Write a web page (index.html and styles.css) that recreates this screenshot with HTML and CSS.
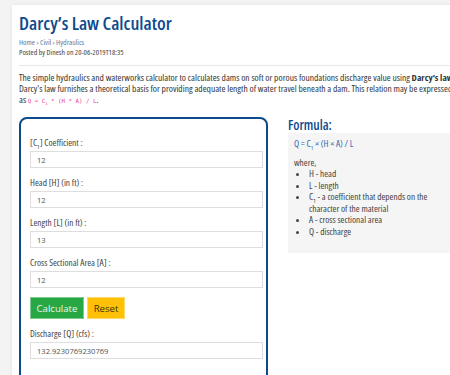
FILE: index.html
```html
<!DOCTYPE html>
<html lang="en">
<head>
  <meta charset="UTF-8">
  <meta name="viewport" content="width=device-width, initial-scale=1.0">
  <title>Darcy's Law Calculator</title>
  <link rel="stylesheet" href="styles.css">
</head>
<body>
  <div class="page">
    <div class="article">
      <h1 class="title">Darcy’s Law Calculator</h1>
      <div class="crumbs">
        <a href="javascript:void(0);">Home</a> › <a href="javascript:void(0);">Civil</a> › <a href="javascript:void(0);">Hydraulics</a>
      </div>
      <div class="posted">Posted by Dinesh on 20-06-2019T18:35</div>
      <hr>
      <p class="intro">
        The simple hydraulics and waterworks calculator to calculates dams on soft or porous foundations discharge value using <b>Darcy's law</b>.<br>
        Darcy's law furnishes a theoretical basis for providing adequate length of water travel beneath a dam. This relation may be expressed<br>
        as <code>Q = C<sub>1</sub> * (H * A) / L</code>.
      </p>
      <div class="main">
        <form class="calc" onsubmit="return false;">
          <label>[C<sub>1</sub>] Coefficient :</label>
          <input type="text" id="c1" value="12">
          <label>Head [H] (in ft) :</label>
          <input type="text" id="h" value="12">
          <label>Length [L] (in ft) :</label>
          <input type="text" id="l" value="13">
          <label>Cross Sectional Area [A] :</label>
          <input type="text" id="a" value="12">
          <div class="buttons">
            <button class="btn btn-calc" id="btn-calc">Calculate</button>
            <button class="btn btn-reset" id="btn-reset" type="reset">Reset</button>
          </div>
          <label>Discharge [Q] (cfs) :</label>
          <input type="text" id="q" value="132.9230769230769" readonly>
        </form>
        <div class="formula">
          <h3 class="formula-title">Formula:</h3>
          <div class="formula-box">
            <div class="eq">Q = C<sub>1</sub> × (H × A) / L</div>
            <div class="where">where,</div>
            <ul>
              <li>H - head</li>
              <li>L - length</li>
              <li>C<sub>1</sub> - a coefficient that depends on the character of the material</li>
              <li>A - cross sectional area</li>
              <li>Q - discharge</li>
            </ul>
          </div>
        </div>
      </div>
    </div>
  </div>
  <script>
    document.querySelector('#btn-calc').onclick = function () {
      var c1 = parseFloat(document.querySelector('#c1').value);
      var h = parseFloat(document.querySelector('#h').value);
      var l = parseFloat(document.querySelector('#l').value);
      var a = parseFloat(document.querySelector('#a').value);
      document.querySelector('#q').value = c1 * (h * a) / l;
    }
  </script>
</body>
</html>
```

FILE: styles.css
```css
* {
  margin: 0;
  padding: 0;
  box-sizing: border-box;
}
a {
  color: inherit;
  text-decoration: none;
}
body {
  background: #f3f3f3;
  font-family: "Open Sans", "Noto Sans", sans-serif;
  font-stretch: 87.5%;
  color: #333;
  overflow: hidden;
}
.page {
  padding: 5px 0 0 12px;
}
/* white article card */
.article {
  width: 640px;
  height: 400px;
  padding: 7px 0 0 7px;
  background: #fff;
  box-shadow: 0 0 4px rgba(0, 0, 0, .06);
}
.title {
  font-size: 18.7px;
  line-height: 22px;
  font-weight: 600;
  color: #0e4a8e;
}
.crumbs {
  margin-top: 3px;
  font-size: 7.8px;
  line-height: 10px;
  color: #5a7aa8;
}
.posted {
  font-size: 7.8px;
  line-height: 10px;
  color: #444;
}
.article hr {
  margin-top: 8px;
  border: none;
  border-top: 1px solid #e8e8e8;
}
.intro {
  margin-top: 6px;
  font-size: 9.5px;
  line-height: 11px;
  color: #333;
}
.intro b {
  font-weight: 700;
}
.intro code {
  font-family: "DejaVu Sans Mono", monospace;
  font-size: 5.8px;
  color: #e83e8c;
}
sub {
  font-size: 65%;
  line-height: 0;
}

.main {
  display: flex;
  align-items: flex-start;
  gap: 20px;
  margin-top: 10px;
}
/* calculator form */
.calc {
  flex: none;
  width: 249px;
  height: 300px;
  padding: 18px 3px 0 9px;
  border: 2px solid #0d4a8c;
  border-radius: 8px;
}
.calc label {
  display: block;
  font-size: 9.4px;
  line-height: 12px;
  margin-bottom: 2px;
  color: #444;
}
.calc input {
  display: block;
  width: 100%;
  height: 17px;
  margin-bottom: 9px;
  padding: 0 6px;
  border: 1px solid #dedede;
  font-family: inherit;
  font-size: 7.6px;
  color: #555;
  outline: none;
}
.buttons {
  display: flex;
  gap: 3px;
  margin-bottom: 9px;
}
.btn {
  height: 22px;
  padding: 0;
  border: 1px solid rgba(255, 255, 255, .4);
  font-family: inherit;
  font-size: 9.6px;
  cursor: pointer;
}
.btn-calc {
  width: 54px;
  background: #28a745;
  color: #eaf6ec;
}
.btn-reset {
  width: 38px;
  background: #ffc107;
  color: #3a3200;
}

/* formula side */
.formula {
  flex: 1;
}
.formula-title {
  font-size: 13.4px;
  line-height: 16px;
  font-weight: 600;
  color: #0e4a8e;
}
.formula-box {
  padding: 5px 6px 16px 6px;
  background: #f5f5f5;
  font-size: 9.4px;
  line-height: 11.5px;
  color: #444;
}
.eq {
  color: #2e6ab4;
}
.where {
  margin-top: 7px;
}
.formula-box ul {
  width: 152px;
  padding-left: 15px;
}
```
